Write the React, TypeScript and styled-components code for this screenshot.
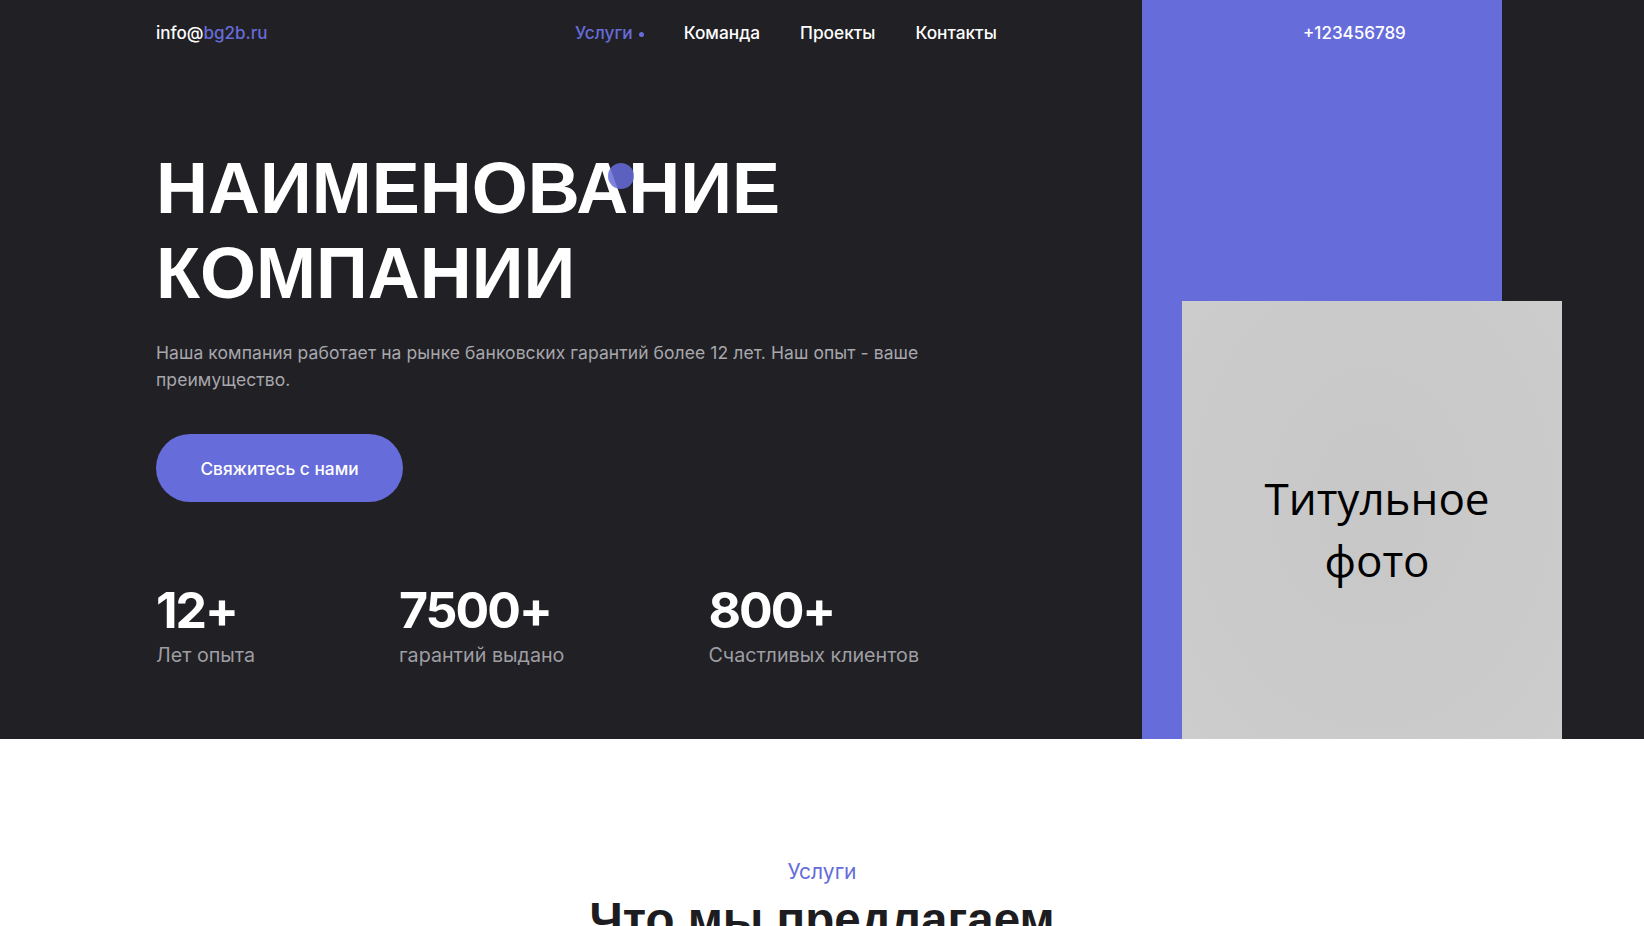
import React from "react";
import styled, { createGlobalStyle } from "styled-components";

const GlobalStyle = createGlobalStyle`
  * { box-sizing: border-box; }
  body {
    margin: 0;
    font-family: Inter, "Noto Sans", sans-serif;
    background: #ffffff;
  }
`;

const navItems = ["Услуги", "Команда", "Проекты", "Контакты"];

const stats = [
  { value: "12+", label: "Лет опыта" },
  { value: "7500+", label: "гарантий выдано" },
  { value: "800+", label: "Счастливых клиентов" },
];

const App: React.FC = () => {
  return (
    <>
      <GlobalStyle />
      <Hero>
        <LeftSide>
          <Header>
            <Email>
              info@<Accent>bg2b.ru</Accent>
            </Email>
            <Nav>
              {navItems.map((item, i) => (
                <NavLink key={item} active={i === 0}>
                  {item}
                  {i === 0 && <NavDot />}
                </NavLink>
              ))}
            </Nav>
          </Header>
          <Title>
            НАИМЕНОВАНИЕ
            <br />
            КОМПАНИИ
            <Cursor />
          </Title>
          <Lead>
            Наша компания работает на рынке банковских гарантий более 12 лет. Наш опыт - ваше
            преимущество.
          </Lead>
          <CtaButton>Свяжитесь с нами</CtaButton>
          <Stats>
            {stats.map((s) => (
              <Stat key={s.value}>
                <StatValue>{s.value}</StatValue>
                <StatLabel>{s.label}</StatLabel>
              </Stat>
            ))}
          </Stats>
        </LeftSide>
        <BluePanel>
          <Phone>+123456789</Phone>
          <Photo>
            <PhotoCaption>
              Титульное
              <br />
              фото
            </PhotoCaption>
          </Photo>
        </BluePanel>
      </Hero>
      <Services>
        <SectionTag>Услуги</SectionTag>
        <SectionTitle>Что мы предлагаем</SectionTitle>
      </Services>
    </>
  );
};

export default App;

const Hero = styled.section`
  display: grid;
  grid-template-columns: 1fr 360px;
  height: 739px;
  padding: 0 142px 0 156px;
  background: #212025;
  color: #ffffff;
`;

const LeftSide = styled.div`
  display: flex;
  flex-direction: column;
  align-items: flex-start;
`;

const Header = styled.header`
  display: flex;
  align-items: center;
  height: 66px;
  width: 100%;
`;

const Email = styled.div`
  font-size: 17px;
  font-weight: 500;
  color: #ffffff;
  width: 419px;
`;

const Accent = styled.span`
  color: #666cd9;
`;

const Nav = styled.nav`
  display: flex;
  gap: 40px;
  margin-top: -2px;
`;

const NavLink = styled.a<{ active?: boolean }>`
  display: flex;
  align-items: center;
  gap: 6px;
  font-size: 17.3px;
  font-weight: 500;
  color: ${(p) => (p.active ? "#666cd9" : "#ffffff")};
  cursor: pointer;
`;

const NavDot = styled.span`
  width: 5px;
  height: 5px;
  margin-top: 4px;
  border-radius: 50%;
  background: #666cd9;
`;

const Title = styled.h1`
  position: relative;
  margin: 80px 0 0;
  font-family: "Liberation Sans", Arial, sans-serif;
  font-weight: 700;
  font-size: 72px;
  line-height: 85px;
  letter-spacing: 0;
  color: #ffffff;
`;

const Cursor = styled.span`
  position: absolute;
  left: 452px;
  top: 17px;
  width: 26px;
  height: 26px;
  border-radius: 50%;
  background: rgba(102, 108, 217, 0.85);
`;

const Lead = styled.p`
  margin: 23px 0 0;
  max-width: 800px;
  font-size: 17.5px;
  line-height: 27px;
  letter-spacing: 0.08px;
  color: #a7a7ac;
`;

const CtaButton = styled.button`
  margin-top: 41px;
  width: 247px;
  height: 68px;
  border: none;
  border-radius: 34px;
  background: #666cd9;
  color: #ffffff;
  font-family: Inter, sans-serif;
  font-size: 17.3px;
  font-weight: 500;
  cursor: pointer;
`;

const Stats = styled.div`
  display: flex;
  gap: 144px;
  margin-top: 80px;
`;

const Stat = styled.div`
  display: flex;
  flex-direction: column;
  gap: 5px;
`;

const StatValue = styled.div`
  font-size: 50px;
  font-weight: 700;
  line-height: 56px;
  letter-spacing: -2px;
  color: #ffffff;
`;

const StatLabel = styled.div`
  font-size: 19.7px;
  line-height: 24px;
  color: #9e9ea3;
`;

const BluePanel = styled.div`
  display: flex;
  flex-direction: column;
  background: #666cd9;
`;

const Phone = styled.div`
  height: 66px;
  display: flex;
  align-items: center;
  padding-left: 161px;
  font-size: 17px;
  font-weight: 500;
  color: #ffffff;
`;

const Photo = styled.div`
  margin: auto -60px 0 40px;
  height: 438px;
  display: flex;
  align-items: center;
  justify-content: center;
  padding: 18px 0 0 10px;
  background: radial-gradient(ellipse at 50% 45%, #c7c7c7 0%, #cacaca 55%, #cdcdcd 100%);
`;

const PhotoCaption = styled.div`
  font-family: "Open Sans", sans-serif;
  font-size: 44px;
  line-height: 62px;
  text-align: center;
  color: #000000;
`;

const Services = styled.section`
  display: flex;
  flex-direction: column;
  align-items: center;
  padding-top: 119px;
  background: #ffffff;
`;

const SectionTag = styled.div`
  font-size: 21px;
  line-height: 28px;
  color: #666cd9;
`;

const SectionTitle = styled.h2`
  margin: 5px 0 0;
  font-family: "Liberation Sans", Arial, sans-serif;
  font-weight: 700;
  font-size: 47.5px;
  line-height: 58px;
  color: #1d1c21;
`;
